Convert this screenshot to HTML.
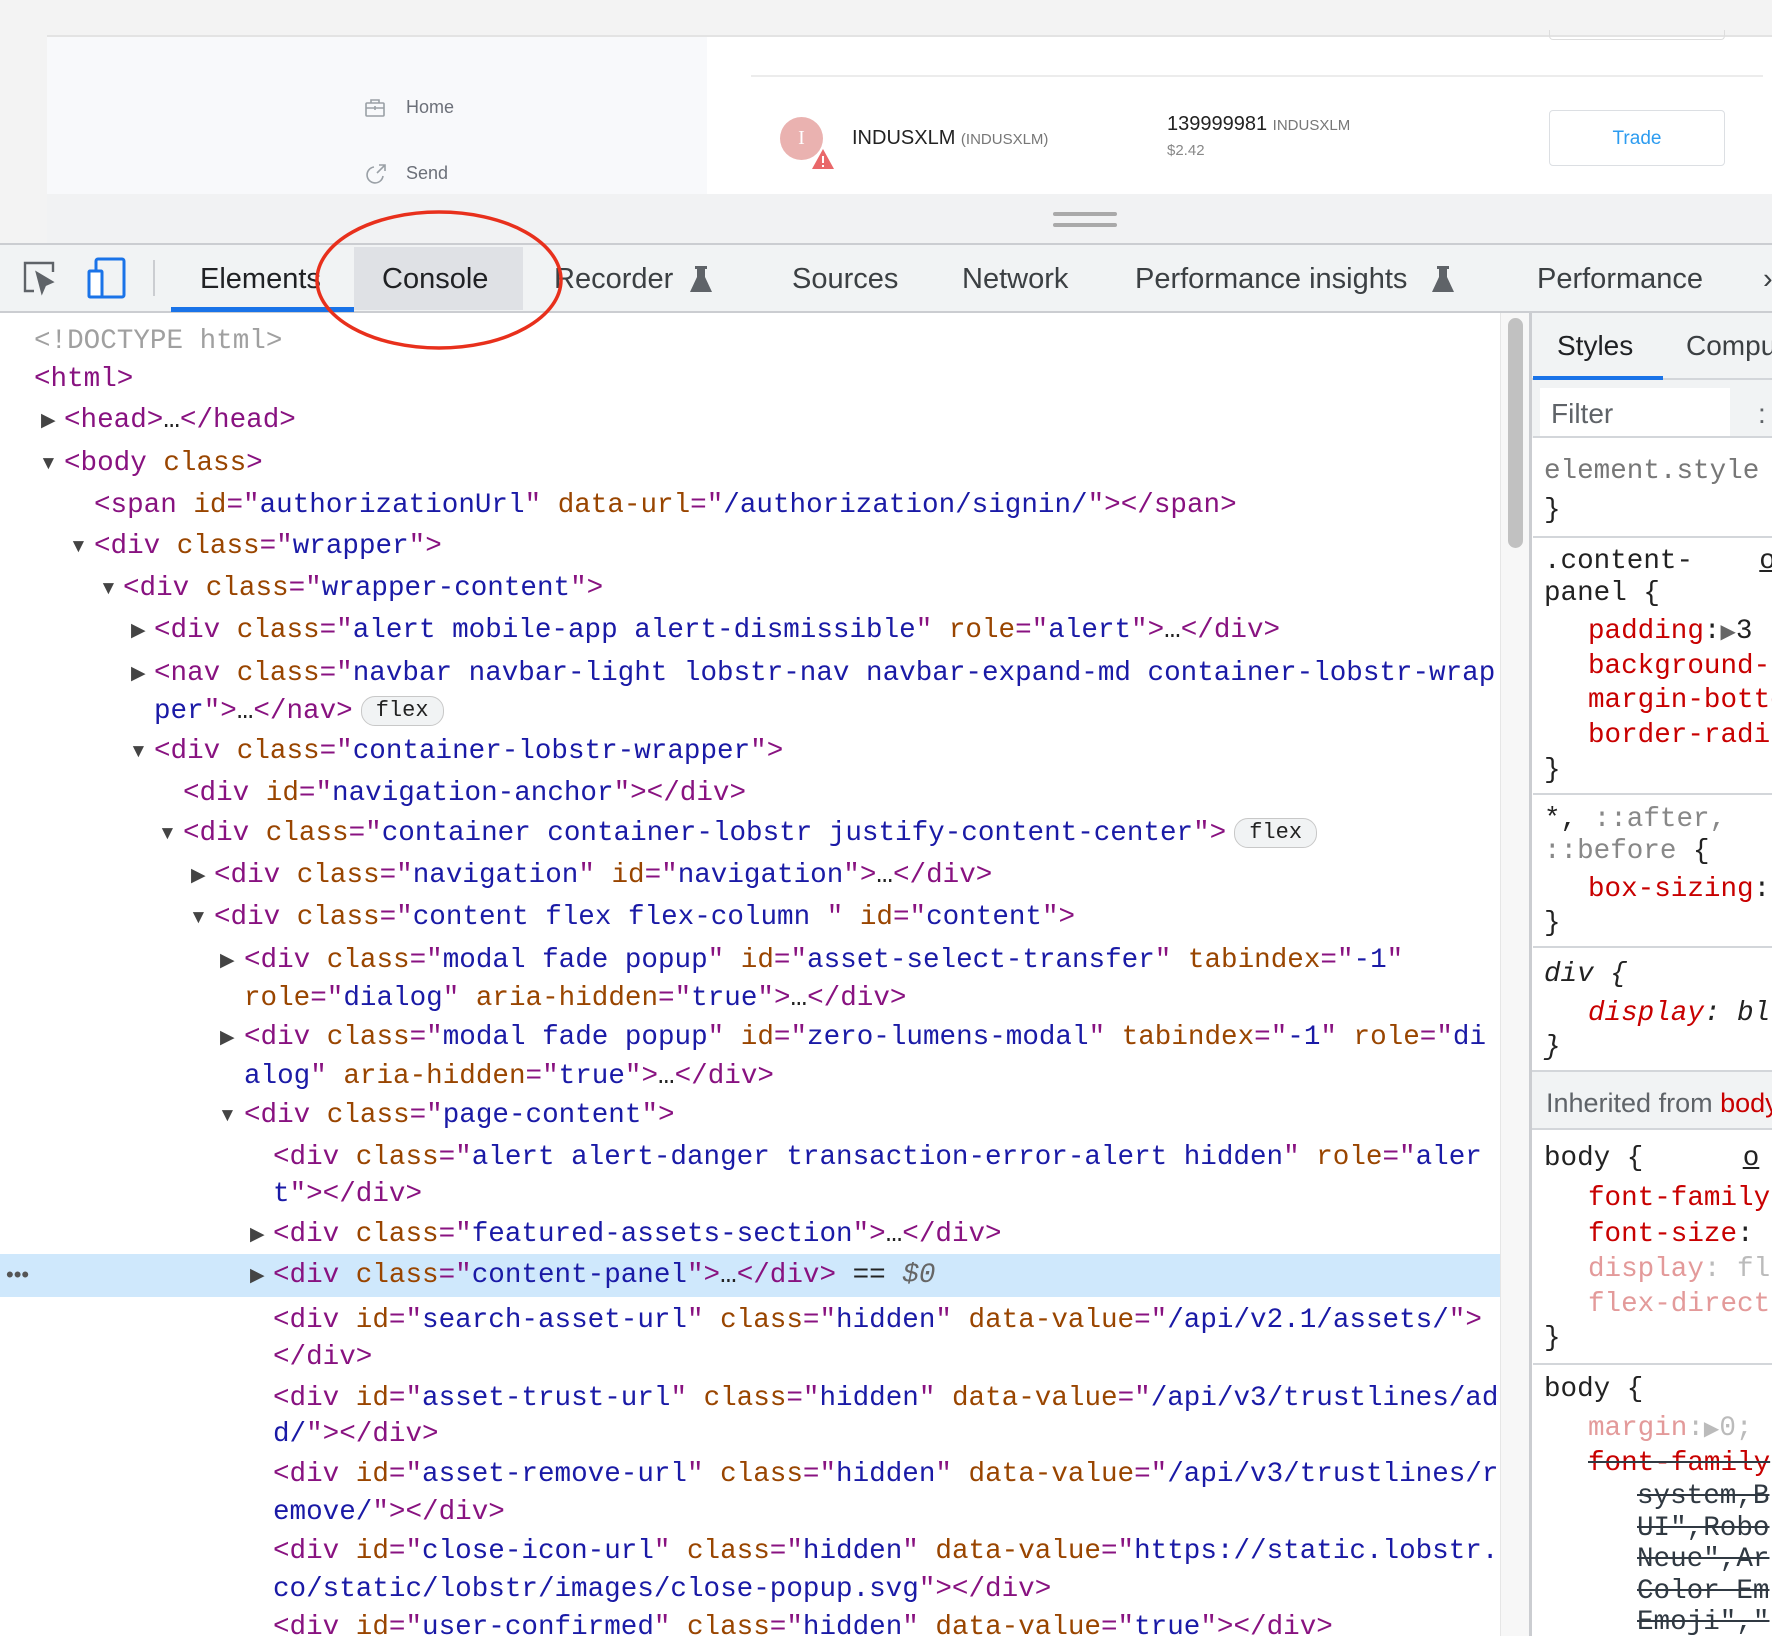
<!DOCTYPE html>
<html><head><meta charset="utf-8"><style>
*{margin:0;padding:0;box-sizing:border-box}
body{width:1772px;height:1636px;overflow:hidden;position:relative;background:#fff;font-family:"Liberation Sans",sans-serif}
.abs{position:absolute}
.m{font-family:"Liberation Mono",monospace;font-size:27.6px;white-space:pre;line-height:40px;position:absolute;margin-top:3px}
.t{color:#881280}.a{color:#994500}.v{color:#1a1aa6}.g{color:#a0a0a0}.k{color:#222}
.tri{position:absolute;font-size:19px;color:#444;line-height:40px;margin-top:3px}
.flex{display:inline-block;font-size:22px;line-height:28px;border:1px solid #c8c8c8;border-radius:14px;padding:0 14px;background:#f1f3f4;color:#222;margin-left:8px;vertical-align:2px}
.r{color:#c80000}.p{color:#e39a9a}.s{text-decoration:line-through;color:#303942}
.sep{position:absolute;left:1533px;width:240px;height:2px;background:#d3d6da}
</style></head><body>
<div class="abs" style="left:0;top:0;width:1772px;height:245px;background:#f3f3f3"></div>
<div class="abs" style="left:47px;top:35px;width:1725px;height:2px;background:#e3e3e3"></div>
<div class="abs" style="left:47px;top:37px;width:660px;height:157px;background:#f8f9fb"></div>
<div class="abs" style="left:707px;top:37px;width:1065px;height:157px;background:#fff"></div>
<div class="abs" style="left:751px;top:75px;width:1012px;height:2px;background:#ececec"></div>
<div class="abs" style="left:1549px;top:30px;width:176px;height:10px;border:1px solid #ddd;border-top:none;border-radius:0 0 4px 4px"></div>
<svg class="abs" style="left:364px;top:97px" width="22" height="22" viewBox="0 0 22 22" fill="none" stroke="#9aa0a6" stroke-width="1.6"><rect x="2" y="6" width="18" height="13" rx="1"/><path d="M7 6V3h8v3M2 11h18M11 9v4"/></svg>
<div class="abs" style="left:406px;top:97px;font-size:18px;color:#6c7079">Home</div>
<svg class="abs" style="left:364px;top:162px" width="24" height="24" viewBox="0 0 24 24" fill="none" stroke="#9aa0a6" stroke-width="1.6"><path d="M10 5a8 8 0 1 0 9 9"/><path d="M13 11l8-8M15 3h6v6"/></svg>
<div class="abs" style="left:406px;top:163px;font-size:18px;color:#6c7079">Send</div>
<div class="abs" style="left:780px;top:117px;width:43px;height:43px;border-radius:50%;background:#eab2b0;color:#fff;font-family:'Liberation Serif',serif;font-size:20px;text-align:center;line-height:43px">I</div>
<svg class="abs" style="left:811px;top:148px" width="24" height="22" viewBox="0 0 24 22"><path d="M12 1L23 21H1z" fill="#e9686a"/><path d="M12 8v7M12 17v2" stroke="#fff" stroke-width="2"/></svg>
<div class="abs" style="left:852px;top:127px;font-size:20px;color:#222">INDUSXLM <span style="font-size:15px;color:#777">(INDUSXLM)</span></div>
<div class="abs" style="left:1167px;top:113px;font-size:20px;color:#222">139999981 <span style="font-size:15px;color:#777">INDUSXLM</span></div>
<div class="abs" style="left:1167px;top:142px;font-size:15px;color:#888">$2.42</div>
<div class="abs" style="left:1549px;top:110px;width:176px;height:56px;border:1px solid #dcdfe3;border-radius:4px;background:#fff;color:#2d9cf0;font-size:19px;text-align:center;line-height:56px">Trade</div>
<div class="abs" style="left:47px;top:194px;width:1725px;height:51px;background:#f1f2f3"></div>
<div class="abs" style="left:1053px;top:212px;width:64px;height:4px;background:#a9a9a9;border-radius:2px"></div>
<div class="abs" style="left:1053px;top:223px;width:64px;height:4px;background:#a9a9a9;border-radius:2px"></div>
<div class="abs" style="left:0;top:243px;width:1772px;height:70px;background:#f1f3f4;border-top:2px solid #cbcdd1;border-bottom:2px solid #cbcdd1"></div>
<svg class="abs" style="left:20px;top:258px" width="40" height="40" viewBox="0 0 40 40" fill="none" stroke="#5f6368" stroke-width="2.4"><path d="M14 33H5V5h28v9"/><path d="M17 15l5 19 3-7 7-3z" fill="#5f6368"/></svg>
<svg class="abs" style="left:86px;top:256px" width="42" height="44" viewBox="0 0 42 44" fill="none" stroke="#1a73e8" stroke-width="3"><rect x="10" y="3" width="28" height="38" rx="2"/><rect x="3" y="15" width="13" height="26" rx="1" fill="#fff"/></svg>
<div class="abs" style="left:153px;top:260px;width:2px;height:36px;background:#cbcdd1"></div>
<div class="abs" style="left:354px;top:247px;width:169px;height:63px;background:#dfe1e5"></div>
<div class="abs" style="left:171px;top:307px;width:183px;height:5px;background:#1a73e8"></div>
<div class="abs" style="left:0;top:262px;width:1772px;height:40px;font-size:29px;color:#202124;line-height:34px;white-space:pre"><span class="abs" style="left:200px">Elements</span><span class="abs" style="left:382px">Console</span><span class="abs" style="left:554px;color:#3c4043">Recorder</span><span class="abs" style="left:792px;color:#3c4043">Sources</span><span class="abs" style="left:962px;color:#3c4043">Network</span><span class="abs" style="left:1135px;color:#3c4043">Performance insights</span><span class="abs" style="left:1537px;color:#3c4043">Performance</span><span class="abs" style="left:1763px;color:#3c4043">›</span></div>
<svg class="abs" style="left:689px;top:264px" width="24" height="30" viewBox="0 0 24 30" fill="#5f6368"><path d="M6 2h12v3h-2v8l7 15H1l7-15V5H6z"/></svg>
<svg class="abs" style="left:1431px;top:264px" width="24" height="30" viewBox="0 0 24 30" fill="#5f6368"><path d="M6 2h12v3h-2v8l7 15H1l7-15V5H6z"/></svg>
<div class="abs" style="left:0;top:1254px;width:1500px;height:43px;background:#cfe8fc"></div>
<div class="abs" style="left:6px;top:1262px;font-size:22px;color:#555">•••</div>
<div class="m g" style="left:34px;top:319px">&lt;!DOCTYPE html&gt;</div>
<div class="m t" style="left:34px;top:357px">&lt;html&gt;</div>
<div class="tri" style="left:41px;top:398px">▶</div><div class="m" style="left:64px;top:398px"><span class="t">&lt;head&gt;</span><span class="k">…</span><span class="t">&lt;/head&gt;</span></div>
<div class="tri" style="left:39px;top:441px">▼</div><div class="m" style="left:64px;top:441px"><span class="t">&lt;body </span><span class="a">class</span><span class="t">&gt;</span></div>
<div class="m" style="left:94px;top:483px"><span class="t">&lt;span </span><span class="a">id</span><span class="t">="</span><span class="v">authorizationUrl</span><span class="t">" </span><span class="a">data-url</span><span class="t">="</span><span class="v">/authorization/signin/</span><span class="t">"&gt;&lt;/span&gt;</span></div>
<div class="tri" style="left:69px;top:524px">▼</div><div class="m" style="left:94px;top:524px"><span class="t">&lt;div </span><span class="a">class</span><span class="t">="</span><span class="v">wrapper</span><span class="t">"&gt;</span></div>
<div class="tri" style="left:99px;top:566px">▼</div><div class="m" style="left:123px;top:566px"><span class="t">&lt;div </span><span class="a">class</span><span class="t">="</span><span class="v">wrapper-content</span><span class="t">"&gt;</span></div>
<div class="tri" style="left:131px;top:608px">▶</div><div class="m" style="left:154px;top:608px"><span class="t">&lt;div </span><span class="a">class</span><span class="t">="</span><span class="v">alert mobile-app alert-dismissible</span><span class="t">" </span><span class="a">role</span><span class="t">="</span><span class="v">alert</span><span class="t">"&gt;</span><span class="k">…</span><span class="t">&lt;/div&gt;</span></div>
<div class="tri" style="left:131px;top:651px">▶</div><div class="m" style="left:154px;top:651px"><span class="t">&lt;nav </span><span class="a">class</span><span class="t">="</span><span class="v">navbar navbar-light lobstr-nav navbar-expand-md container-lobstr-wrap</span></div>
<div class="m" style="left:154px;top:689px"><span class="v">per</span><span class="t">"&gt;</span><span class="k">…</span><span class="t">&lt;/nav&gt;</span><span class="flex">flex</span></div>
<div class="tri" style="left:129px;top:729px">▼</div><div class="m" style="left:154px;top:729px"><span class="t">&lt;div </span><span class="a">class</span><span class="t">="</span><span class="v">container-lobstr-wrapper</span><span class="t">"&gt;</span></div>
<div class="m" style="left:183px;top:771px"><span class="t">&lt;div </span><span class="a">id</span><span class="t">="</span><span class="v">navigation-anchor</span><span class="t">"&gt;&lt;/div&gt;</span></div>
<div class="tri" style="left:158px;top:811px">▼</div><div class="m" style="left:183px;top:811px"><span class="t">&lt;div </span><span class="a">class</span><span class="t">="</span><span class="v">container container-lobstr justify-content-center</span><span class="t">"&gt;</span><span class="flex">flex</span></div>
<div class="tri" style="left:191px;top:853px">▶</div><div class="m" style="left:214px;top:853px"><span class="t">&lt;div </span><span class="a">class</span><span class="t">="</span><span class="v">navigation</span><span class="t">" </span><span class="a">id</span><span class="t">="</span><span class="v">navigation</span><span class="t">"&gt;</span><span class="k">…</span><span class="t">&lt;/div&gt;</span></div>
<div class="tri" style="left:189px;top:895px">▼</div><div class="m" style="left:214px;top:895px"><span class="t">&lt;div </span><span class="a">class</span><span class="t">="</span><span class="v">content flex flex-column </span><span class="t">" </span><span class="a">id</span><span class="t">="</span><span class="v">content</span><span class="t">"&gt;</span></div>
<div class="tri" style="left:220px;top:938px">▶</div><div class="m" style="left:244px;top:938px"><span class="t">&lt;div </span><span class="a">class</span><span class="t">="</span><span class="v">modal fade popup</span><span class="t">" </span><span class="a">id</span><span class="t">="</span><span class="v">asset-select-transfer</span><span class="t">" </span><span class="a">tabindex</span><span class="t">="</span><span class="v">-1</span><span class="t">"</span></div>
<div class="m" style="left:244px;top:976px"><span class="a">role</span><span class="t">="</span><span class="v">dialog</span><span class="t">" </span><span class="a">aria-hidden</span><span class="t">="</span><span class="v">true</span><span class="t">"&gt;</span><span class="k">…</span><span class="t">&lt;/div&gt;</span></div>
<div class="tri" style="left:220px;top:1015px">▶</div><div class="m" style="left:244px;top:1015px"><span class="t">&lt;div </span><span class="a">class</span><span class="t">="</span><span class="v">modal fade popup</span><span class="t">" </span><span class="a">id</span><span class="t">="</span><span class="v">zero-lumens-modal</span><span class="t">" </span><span class="a">tabindex</span><span class="t">="</span><span class="v">-1</span><span class="t">" </span><span class="a">role</span><span class="t">="</span><span class="v">di</span></div>
<div class="m" style="left:244px;top:1054px"><span class="v">alog</span><span class="t">" </span><span class="a">aria-hidden</span><span class="t">="</span><span class="v">true</span><span class="t">"&gt;</span><span class="k">…</span><span class="t">&lt;/div&gt;</span></div>
<div class="tri" style="left:218px;top:1093px">▼</div><div class="m" style="left:244px;top:1093px"><span class="t">&lt;div </span><span class="a">class</span><span class="t">="</span><span class="v">page-content</span><span class="t">"&gt;</span></div>
<div class="m" style="left:273px;top:1135px"><span class="t">&lt;div </span><span class="a">class</span><span class="t">="</span><span class="v">alert alert-danger transaction-error-alert hidden</span><span class="t">" </span><span class="a">role</span><span class="t">="</span><span class="v">aler</span></div>
<div class="m" style="left:273px;top:1172px"><span class="v">t</span><span class="t">"&gt;&lt;/div&gt;</span></div>
<div class="tri" style="left:250px;top:1212px">▶</div><div class="m" style="left:273px;top:1212px"><span class="t">&lt;div </span><span class="a">class</span><span class="t">="</span><span class="v">featured-assets-section</span><span class="t">"&gt;</span><span class="k">…</span><span class="t">&lt;/div&gt;</span></div>
<div class="tri" style="left:250px;top:1253px">▶</div><div class="m" style="left:273px;top:1253px"><span class="t">&lt;div </span><span class="a">class</span><span class="t">="</span><span class="v">content-panel</span><span class="t">"&gt;</span><span class="k">…</span><span class="t">&lt;/div&gt;</span><span class="k"> == </span><span style="color:#666;font-style:italic">$0</span></div>
<div class="m" style="left:273px;top:1298px"><span class="t">&lt;div </span><span class="a">id</span><span class="t">="</span><span class="v">search-asset-url</span><span class="t">" </span><span class="a">class</span><span class="t">="</span><span class="v">hidden</span><span class="t">" </span><span class="a">data-value</span><span class="t">="</span><span class="v">/api/v2.1/assets/</span><span class="t">"&gt;</span></div>
<div class="m t" style="left:273px;top:1335px">&lt;/div&gt;</div>
<div class="m" style="left:273px;top:1376px"><span class="t">&lt;div </span><span class="a">id</span><span class="t">="</span><span class="v">asset-trust-url</span><span class="t">" </span><span class="a">class</span><span class="t">="</span><span class="v">hidden</span><span class="t">" </span><span class="a">data-value</span><span class="t">="</span><span class="v">/api/v3/trustlines/ad</span></div>
<div class="m" style="left:273px;top:1412px"><span class="v">d/</span><span class="t">"&gt;&lt;/div&gt;</span></div>
<div class="m" style="left:273px;top:1452px"><span class="t">&lt;div </span><span class="a">id</span><span class="t">="</span><span class="v">asset-remove-url</span><span class="t">" </span><span class="a">class</span><span class="t">="</span><span class="v">hidden</span><span class="t">" </span><span class="a">data-value</span><span class="t">="</span><span class="v">/api/v3/trustlines/r</span></div>
<div class="m" style="left:273px;top:1490px"><span class="v">emove/</span><span class="t">"&gt;&lt;/div&gt;</span></div>
<div class="m" style="left:273px;top:1529px"><span class="t">&lt;div </span><span class="a">id</span><span class="t">="</span><span class="v">close-icon-url</span><span class="t">" </span><span class="a">class</span><span class="t">="</span><span class="v">hidden</span><span class="t">" </span><span class="a">data-value</span><span class="t">="</span><span class="v">https://static.lobstr.</span></div>
<div class="m" style="left:273px;top:1567px"><span class="v">co/static/lobstr/images/close-popup.svg</span><span class="t">"&gt;&lt;/div&gt;</span></div>
<div class="m" style="left:273px;top:1605px"><span class="t">&lt;div </span><span class="a">id</span><span class="t">="</span><span class="v">user-confirmed</span><span class="t">" </span><span class="a">class</span><span class="t">="</span><span class="v">hidden</span><span class="t">" </span><span class="a">data-value</span><span class="t">="</span><span class="v">true</span><span class="t">"&gt;&lt;/div&gt;</span></div>
<div class="abs" style="left:1500px;top:313px;width:31px;height:1323px;background:#f7f7f7;border-left:1px solid #e6e6e6"></div>
<div class="abs" style="left:1508px;top:318px;width:15px;height:230px;background:#c1c1c1;border-radius:8px"></div>
<div class="abs" style="left:1529px;top:313px;width:3px;height:1323px;background:#cbcdd1"></div>
<div class="abs" style="left:1532px;top:313px;width:240px;height:125px;background:#f1f3f4"></div>
<div class="abs" style="left:1532px;top:378px;width:240px;height:2px;background:#d3d6da"></div>
<div class="abs" style="left:1533px;top:376px;width:130px;height:4px;background:#1a73e8"></div>
<div class="abs" style="left:1557px;top:330px;font-size:28px;color:#202124">Styles</div>
<div class="abs" style="left:1686px;top:330px;font-size:28px;color:#3c4043;white-space:nowrap">Computed</div>
<div class="abs" style="left:1540px;top:388px;width:190px;height:50px;background:#fff"></div>
<div class="abs" style="left:1551px;top:398px;font-size:28px;color:#5f6368">Filter</div>
<div class="abs" style="left:1758px;top:398px;font-size:28px;color:#5f6368">:</div>
<div class="sep" style="top:436px"></div>
<div class="m" style="left:1544px;top:449px;color:#777">element.style {</div>
<div class="m k" style="left:1544px;top:488px">}</div>
<div class="sep" style="top:536px"></div>
<div class="m k" style="left:1544px;top:539px">.content-    <span style="text-decoration:underline">o</span></div>
<div class="m k" style="left:1544px;top:571px">panel {</div>
<div class="m" style="left:1588px;top:609px"><span class="r">padding</span><span class="k">:<span style="color:#666;font-size:20px">▶</span>3</span></div>
<div class="m r" style="left:1588px;top:644px">background-</div>
<div class="m r" style="left:1588px;top:678px">margin-botto</div>
<div class="m r" style="left:1588px;top:713px">border-radi</div>
<div class="m k" style="left:1544px;top:748px">}</div>
<div class="sep" style="top:793px"></div>
<div class="m" style="left:1544px;top:797px"><span class="k">*, </span><span style="color:#888">::after,</span></div>
<div class="m" style="left:1544px;top:829px"><span style="color:#888">::before</span><span class="k"> {</span></div>
<div class="m" style="left:1588px;top:867px"><span class="r">box-sizing</span><span class="k">:</span></div>
<div class="m k" style="left:1544px;top:901px">}</div>
<div class="sep" style="top:946px"></div>
<div class="m k" style="left:1544px;top:952px;font-style:italic">div {</div>
<div class="m" style="left:1588px;top:991px;font-style:italic"><span class="r">display</span><span class="k">: bl</span></div>
<div class="m k" style="left:1544px;top:1025px;font-style:italic">}</div>
<div class="abs" style="left:1532px;top:1070px;width:240px;height:60px;background:#f1f3f4;border-top:2px solid #d3d6da;border-bottom:2px solid #d3d6da"></div>
<div class="abs" style="left:1546px;top:1088px;font-size:27px;color:#5f6368;white-space:nowrap">Inherited from <span style="color:#c80000">body</span></div>
<div class="m k" style="left:1544px;top:1136px">body {      <span style="text-decoration:underline">o</span></div>
<div class="m r" style="left:1588px;top:1176px">font-family</div>
<div class="m" style="left:1588px;top:1212px"><span class="r">font-size</span><span class="k">:</span></div>
<div class="m" style="left:1588px;top:1247px"><span class="p">display</span><span style="color:#bbb">: fl</span></div>
<div class="m p" style="left:1588px;top:1282px">flex-direct</div>
<div class="m k" style="left:1544px;top:1316px">}</div>
<div class="sep" style="top:1363px"></div>
<div class="m k" style="left:1544px;top:1367px">body {</div>
<div class="m" style="left:1588px;top:1406px"><span class="p">margin</span><span style="color:#bbb">:<span style="font-size:20px">▶</span>0;</span></div>
<div class="m r" style="left:1588px;top:1441px;text-decoration:line-through;text-decoration-color:#303942">font-family</div>
<div class="m s" style="left:1637px;top:1474px">system,B</div>
<div class="m s" style="left:1637px;top:1506px">UI",Robo</div>
<div class="m s" style="left:1637px;top:1537px">Neue",Ar</div>
<div class="m s" style="left:1637px;top:1569px">Color Em</div>
<div class="m s" style="left:1637px;top:1600px">Emoji","</div>
<svg class="abs" style="left:300px;top:200px" width="280" height="160" viewBox="0 0 280 160"><ellipse cx="139" cy="80" rx="122" ry="68" fill="none" stroke="#e8301c" stroke-width="3.5"/></svg>
</body></html>
